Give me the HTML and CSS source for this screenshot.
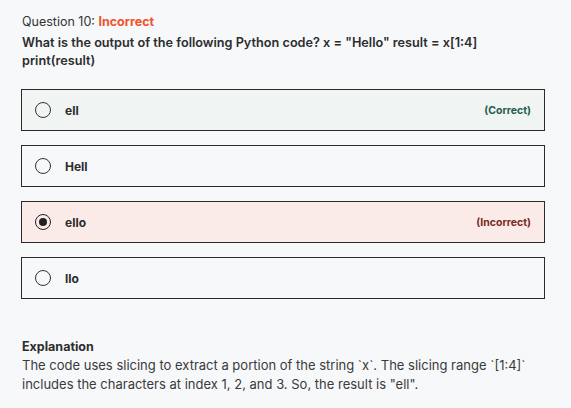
FILE: index.html
```html
<!DOCTYPE html>
<html>
<head>
<meta charset="utf-8">
<link rel="stylesheet" href="styles.css">
</head>
<body>
<div class="quiz">
  <p class="status">Question 10: <span class="status-bad">Incorrect</span></p>
  <p class="question">What is the output of the following Python code? x = "Hello" result = x[1:4] print(result)</p>
  <div class="options">
    <div class="option option-correct">
      <span class="radio"></span>
      <span class="label">ell</span>
      <span class="tag tag-correct">(Correct)</span>
    </div>
    <div class="option">
      <span class="radio"></span>
      <span class="label">Hell</span>
    </div>
    <div class="option option-wrong">
      <span class="radio radio-on"></span>
      <span class="label">ello</span>
      <span class="tag tag-wrong">(Incorrect)</span>
    </div>
    <div class="option">
      <span class="radio"></span>
      <span class="label">llo</span>
    </div>
  </div>
  <div class="explain">
    <p class="explain-title">Explanation</p>
    <p class="explain-body">The code uses slicing to extract a portion of the string `x`. The slicing range `[1:4]` includes the characters at index 1, 2, and 3. So, the result is "ell".</p>
  </div>
</div>
</body>
</html>
```
FILE: styles.css
```css
html, body {
  margin: 0;
  background: #f7f8fa;
}
body {
  font-family: Inter, "Open Sans", sans-serif;
  color: #2d2d2d;
}
.quiz {
  padding: 13px 26px 0 21px;
}
.status {
  margin: 0;
  padding-left: 1px;
  font-size: 12.5px;
  line-height: 18px;
  color: #333;
}
.status-bad {
  color: #f0532d;
  font-weight: 700;
}
.question {
  margin: 3px 0 0;
  padding-left: 1px;
  font-size: 12.7px;
  line-height: 18px;
  font-weight: 600;
  color: #2d2d2d;
}
.options {
  margin-top: 19px;
  display: flex;
  flex-direction: column;
  gap: 14px;
}
.option {
  height: 42px;
  box-sizing: border-box;
  border: 1px solid #2b2b2b;
  display: flex;
  align-items: center;
  padding: 0 13px;
  gap: 14px;
}
.option-correct {
  background: #f0f4f2;
}
.option-wrong {
  background: #fbebe8;
}
.radio {
  width: 16px;
  height: 16px;
  box-sizing: border-box;
  border-radius: 50%;
  border: 1px solid #333;
  flex: none;
  display: flex;
  align-items: center;
  justify-content: center;
}
.radio-on {
  border: 1.5px solid #222;
}
.radio-on::after {
  content: "";
  width: 8px;
  height: 8px;
  border-radius: 50%;
  background: #222;
}
.label {
  font-size: 12px;
  font-weight: 700;
  color: #2d2d2d;
  flex: 1;
}
.tag {
  font-size: 10.5px;
  font-weight: 700;
}
.tag-correct {
  color: #235e50;
}
.tag-wrong {
  color: #7a2a22;
}
.explain {
  margin-top: 38px;
  padding-left: 1px;
}
.explain-title {
  margin: 0;
  font-size: 12.5px;
  line-height: 19px;
  font-weight: 700;
  color: #2d2d2d;
}
.explain-body {
  margin: 0;
  font-size: 13px;
  line-height: 19px;
  color: #3a3a3a;
}
```
